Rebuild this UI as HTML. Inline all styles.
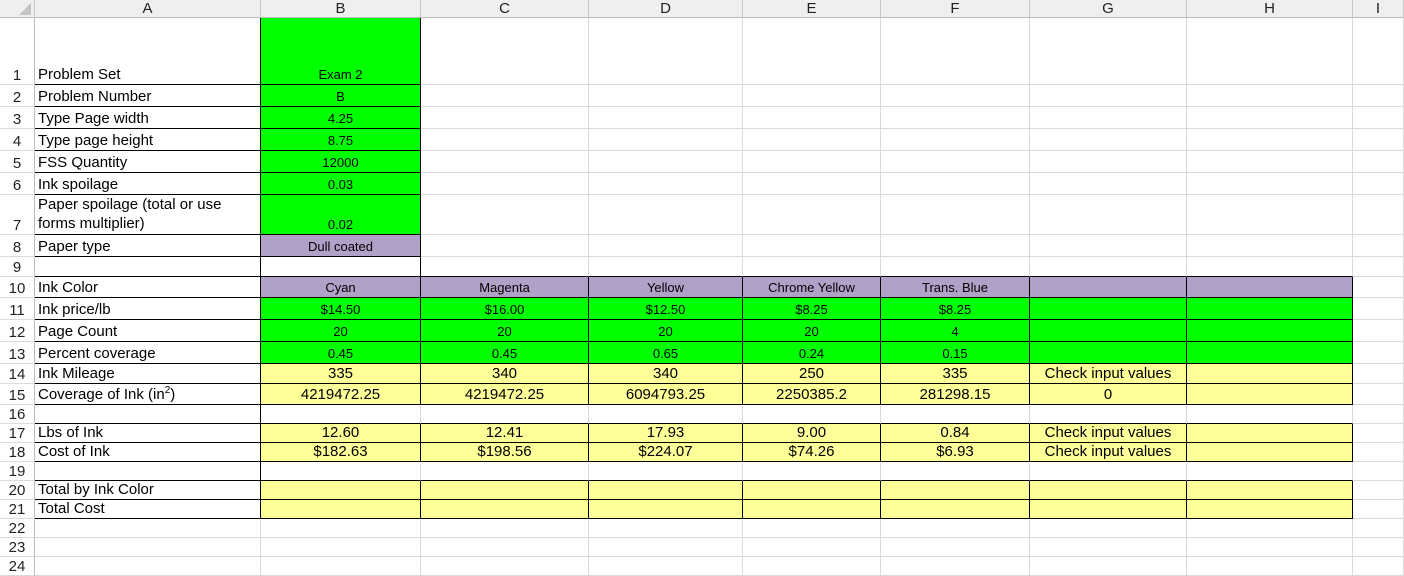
<!DOCTYPE html>
<html><head><meta charset="utf-8"><style>
*{margin:0;padding:0;box-sizing:border-box}
body{width:1404px;height:575px;overflow:hidden;background:#fff;font-family:"Liberation Sans",Arial,sans-serif;color:#000}
table{border-collapse:separate;border-spacing:0;table-layout:fixed;width:1404px}
td{border-right:1px solid #dadada;border-bottom:1px solid #dadada;font-size:15px;white-space:nowrap;overflow:hidden;vertical-align:bottom;padding:0 3px 1px;line-height:17px}
tr.h td{background:#efefef;text-align:center;vertical-align:middle;color:#222;border-bottom:1px solid #bcbcbc;border-right:1px solid #c8c8c8;padding:0}
td.n{text-align:center;padding:0;color:#222;border-right:1px solid #bcbcbc;font-size:15px}
td.k{border-right:1px solid #000;border-bottom:1px solid #000}
td.bb{border-bottom:1px solid #000}
.c{text-align:center}
.s{font-size:13px}
.g{background:#00ff00}
.p{background:#b1a0c7}
.y{background:#ffff99}
.w{white-space:normal;line-height:19px}
</style></head><body>
<table>
<colgroup><col style="width:35px"><col style="width:226px"><col style="width:160px"><col style="width:168px"><col style="width:154px"><col style="width:138px"><col style="width:149px"><col style="width:157px"><col style="width:166px"><col style="width:51px"></colgroup>
<tr class="h" style="height:18px"><td style="position:relative"><svg width="12" height="12" style="position:absolute;right:3px;bottom:2px"><polygon points="12,0 12,12 0,12" fill="#c4c4c4"/></svg></td><td>A</td><td>B</td><td>C</td><td>D</td><td>E</td><td>F</td><td>G</td><td>H</td><td>I</td></tr>
<tr style="height:67px"><td class="n">1</td><td class="k">Problem Set</td><td class="k g c s">Exam 2</td><td></td><td></td><td></td><td></td><td></td><td></td><td></td></tr>
<tr style="height:22px"><td class="n">2</td><td class="k">Problem Number</td><td class="k g c s">B</td><td></td><td></td><td></td><td></td><td></td><td></td><td></td></tr>
<tr style="height:22px"><td class="n">3</td><td class="k">Type Page width</td><td class="k g c s">4.25</td><td></td><td></td><td></td><td></td><td></td><td></td><td></td></tr>
<tr style="height:22px"><td class="n">4</td><td class="k">Type page height</td><td class="k g c s">8.75</td><td></td><td></td><td></td><td></td><td></td><td></td><td></td></tr>
<tr style="height:22px"><td class="n">5</td><td class="k">FSS Quantity</td><td class="k g c s">12000</td><td></td><td></td><td></td><td></td><td></td><td></td><td></td></tr>
<tr style="height:22px"><td class="n">6</td><td class="k">Ink spoilage</td><td class="k g c s">0.03</td><td></td><td></td><td></td><td></td><td></td><td></td><td></td></tr>
<tr style="height:39px"><td class="n">7</td><td class="k w">Paper spoilage (total or use forms multiplier)</td><td class="k g c s">0.02</td><td></td><td></td><td></td><td></td><td></td><td></td><td></td></tr>
<tr style="height:22px"><td class="n">8</td><td class="k">Paper type</td><td class="k p c s">Dull coated</td><td></td><td></td><td></td><td></td><td></td><td></td><td></td></tr>
<tr style="height:20px"><td class="n">9</td><td class="k"></td><td class="k"></td><td class="bb"></td><td class="bb"></td><td class="bb"></td><td class="bb"></td><td class="bb"></td><td class="bb"></td><td></td></tr>
<tr style="height:21px"><td class="n">10</td><td class="k">Ink Color</td><td class="k p c s">Cyan</td><td class="k p c s">Magenta</td><td class="k p c s">Yellow</td><td class="k p c s">Chrome Yellow</td><td class="k p c s">Trans. Blue</td><td class="k p"></td><td class="k p"></td><td></td></tr>
<tr style="height:22px"><td class="n">11</td><td class="k">Ink price/lb</td><td class="k g c s">$14.50</td><td class="k g c s">$16.00</td><td class="k g c s">$12.50</td><td class="k g c s">$8.25</td><td class="k g c s">$8.25</td><td class="k g"></td><td class="k g"></td><td></td></tr>
<tr style="height:22px"><td class="n">12</td><td class="k">Page Count</td><td class="k g c s">20</td><td class="k g c s">20</td><td class="k g c s">20</td><td class="k g c s">20</td><td class="k g c s">4</td><td class="k g"></td><td class="k g"></td><td></td></tr>
<tr style="height:22px"><td class="n">13</td><td class="k">Percent coverage</td><td class="k g c s">0.45</td><td class="k g c s">0.45</td><td class="k g c s">0.65</td><td class="k g c s">0.24</td><td class="k g c s">0.15</td><td class="k g"></td><td class="k g"></td><td></td></tr>
<tr style="height:20px"><td class="n">14</td><td class="k">Ink Mileage</td><td class="k y c">335</td><td class="k y c">340</td><td class="k y c">340</td><td class="k y c">250</td><td class="k y c">335</td><td class="k y c">Check input values</td><td class="k y"></td><td></td></tr>
<tr style="height:21px"><td class="n">15</td><td class="k">Coverage of Ink (in<sup style="font-size:10px;line-height:0">2</sup>)</td><td class="k y c">4219472.25</td><td class="k y c">4219472.25</td><td class="k y c">6094793.25</td><td class="k y c">2250385.2</td><td class="k y c">281298.15</td><td class="k y c">0</td><td class="k y"></td><td></td></tr>
<tr style="height:19px"><td class="n">16</td><td class="k"></td><td class="bb"></td><td class="bb"></td><td class="bb"></td><td class="bb"></td><td class="bb"></td><td class="bb"></td><td class="bb"></td><td></td></tr>
<tr style="height:19px"><td class="n">17</td><td class="k">Lbs of Ink</td><td class="k y c">12.60</td><td class="k y c">12.41</td><td class="k y c">17.93</td><td class="k y c">9.00</td><td class="k y c">0.84</td><td class="k y c">Check input values</td><td class="k y"></td><td></td></tr>
<tr style="height:19px"><td class="n">18</td><td class="k">Cost of Ink</td><td class="k y c">$182.63</td><td class="k y c">$198.56</td><td class="k y c">$224.07</td><td class="k y c">$74.26</td><td class="k y c">$6.93</td><td class="k y c">Check input values</td><td class="k y"></td><td></td></tr>
<tr style="height:19px"><td class="n">19</td><td class="k"></td><td class="bb"></td><td class="bb"></td><td class="bb"></td><td class="bb"></td><td class="bb"></td><td class="bb"></td><td class="bb"></td><td></td></tr>
<tr style="height:19px"><td class="n">20</td><td class="k">Total by Ink Color</td><td class="k y"></td><td class="k y"></td><td class="k y"></td><td class="k y"></td><td class="k y"></td><td class="k y"></td><td class="k y"></td><td></td></tr>
<tr style="height:19px"><td class="n">21</td><td class="k">Total Cost</td><td class="k y"></td><td class="k y"></td><td class="k y"></td><td class="k y"></td><td class="k y"></td><td class="k y"></td><td class="k y"></td><td></td></tr>
<tr style="height:19px"><td class="n">22</td><td></td><td></td><td></td><td></td><td></td><td></td><td></td><td></td><td></td></tr>
<tr style="height:19px"><td class="n">23</td><td></td><td></td><td></td><td></td><td></td><td></td><td></td><td></td><td></td></tr>
<tr style="height:19px"><td class="n">24</td><td></td><td></td><td></td><td></td><td></td><td></td><td></td><td></td><td></td></tr>
</table>
</body></html>
